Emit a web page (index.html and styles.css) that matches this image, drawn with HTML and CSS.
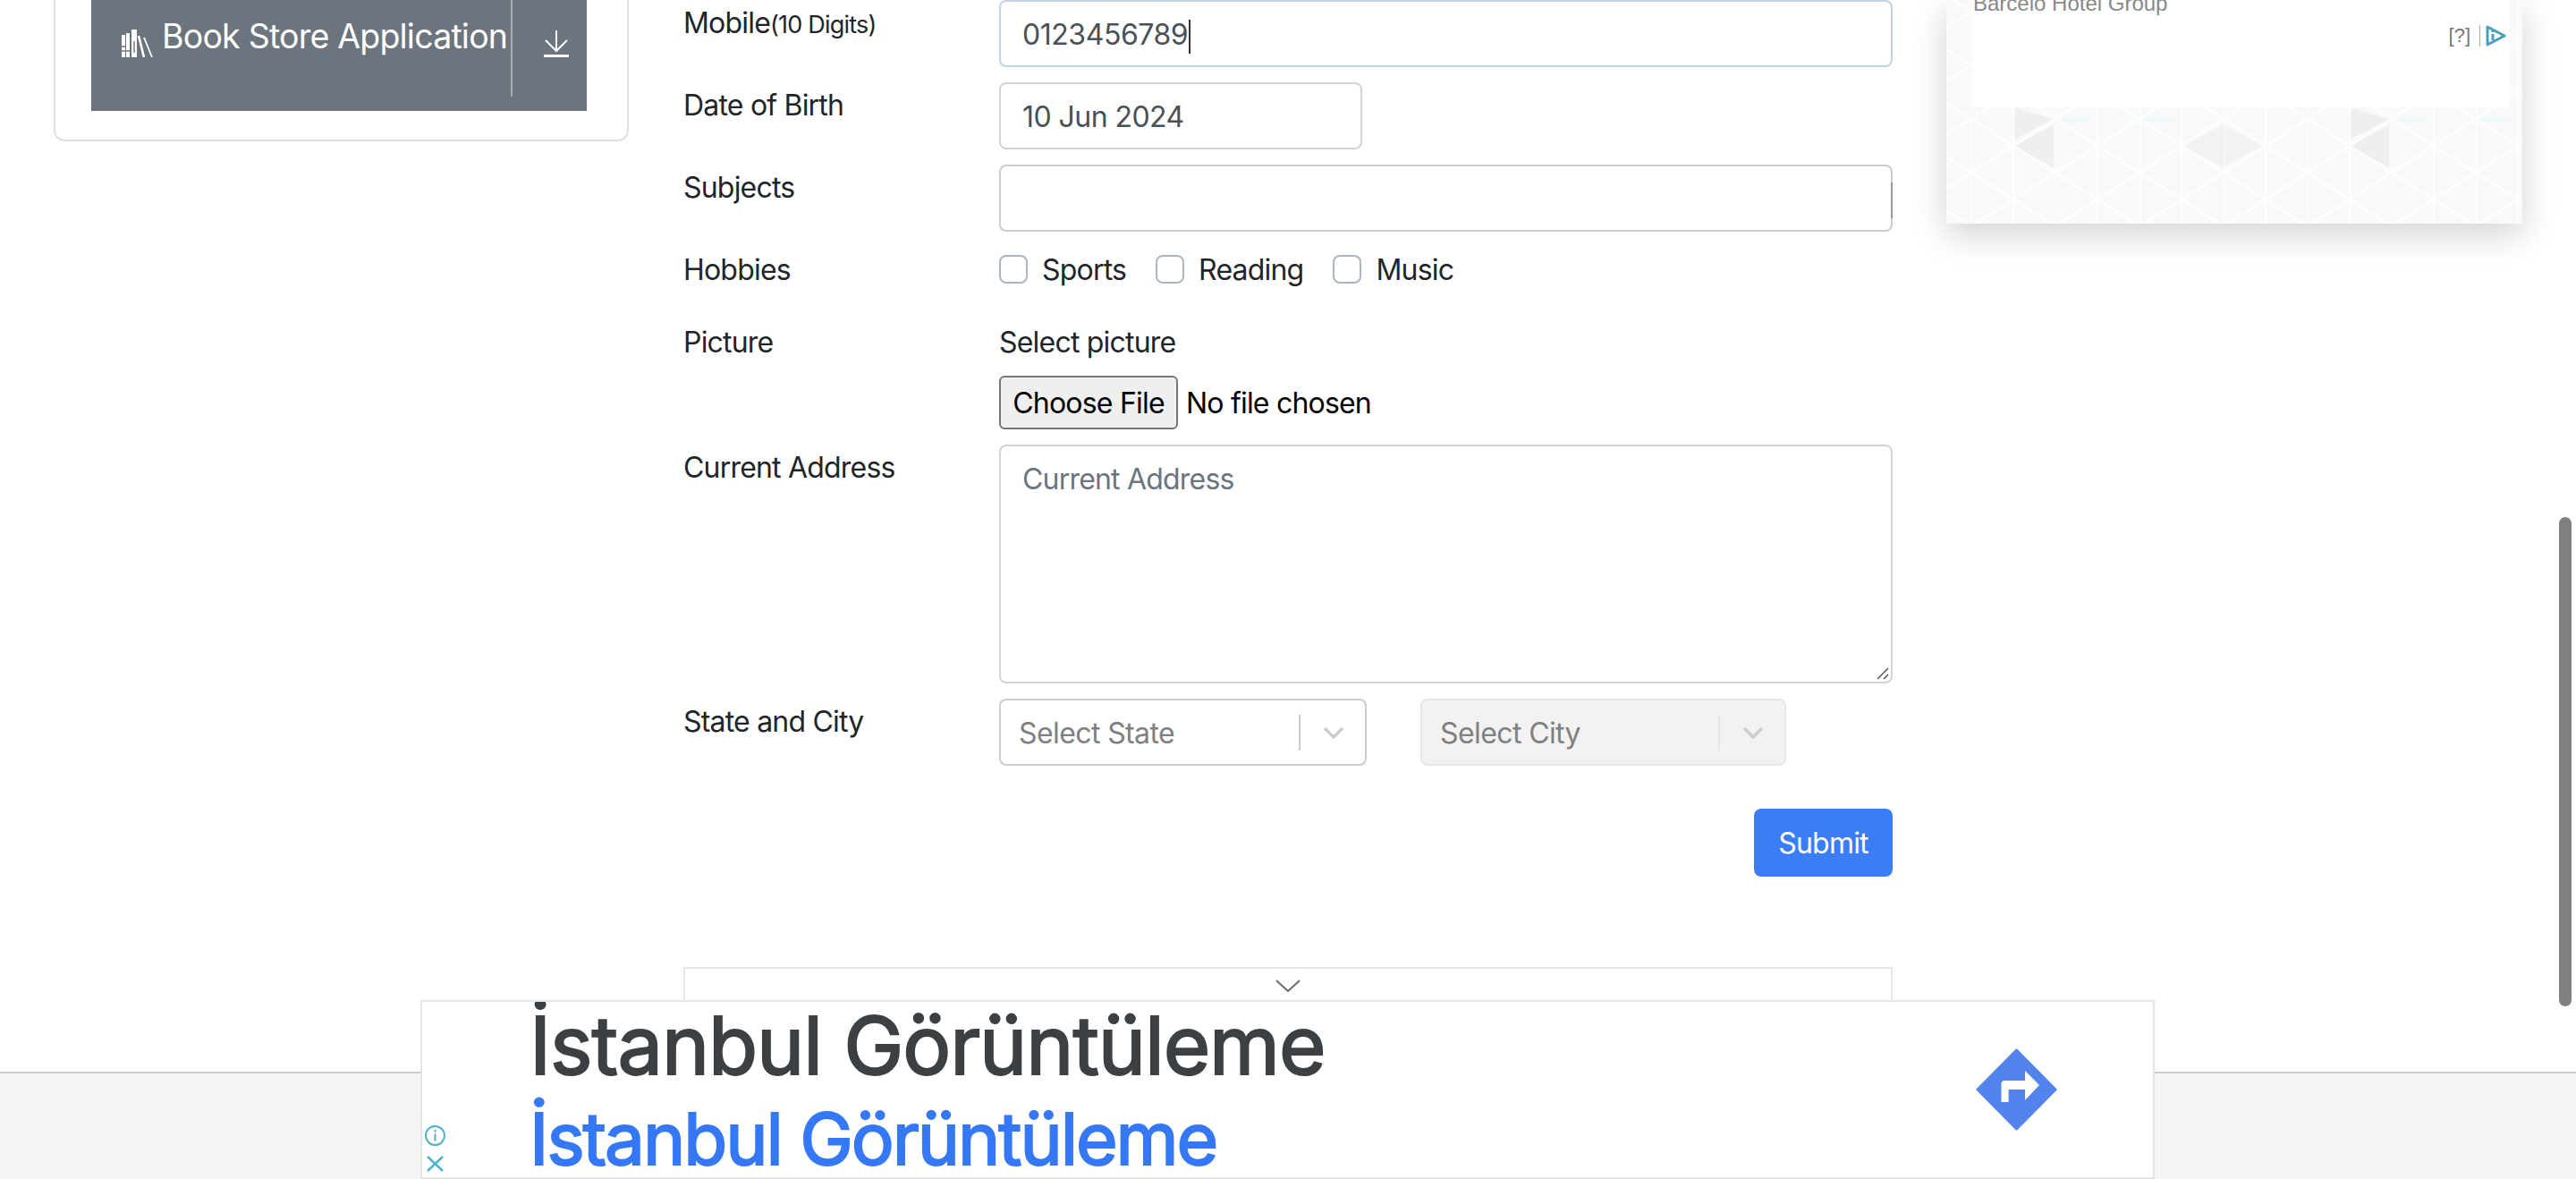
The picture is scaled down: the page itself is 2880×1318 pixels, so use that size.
FILE: index.html
```html
<!DOCTYPE html>
<html lang="en">
<head>
    <meta charset="UTF-8">
    <meta name="viewport" content="width=device-width, initial-scale=1.0">
    <title>Practice Form</title>
    <link rel="stylesheet" href="styles.css">
</head>
<body>
    <main class="page">
        <!-- Left menu -->
        <aside class="sidebar">
            <div class="menu-card">
                <div class="menu-item">
                    <svg class="book-icon" viewBox="0 0 36 32" fill="#fff">
                        <rect x="1" y="7" width="4" height="25"/>
                        <rect x="6" y="5" width="4" height="27"/>
                        <rect x="12" y="1" width="6" height="31"/>
                        <path d="M1 20h4M1 25h4M6 25h4M15 14v13" stroke="#6c757d" stroke-width="1.4"/>
                        <path d="M20 8l6 24" stroke="#fff" stroke-width="2.6"/>
                        <path d="M26 10l9 22" stroke="#fff" stroke-width="1.8"/>
                    </svg>
                    <span class="menu-text">Book Store Application</span>
                    <span class="menu-divider"></span>
                    <svg class="download-icon" viewBox="0 0 28 30" fill="none" stroke="#fff">
                        <path d="M14 0v22M2 11l12 12 12-12" stroke-width="2"/>
                        <path d="M0 28.500h28" stroke-width="3"/>
                    </svg>
                </div>
            </div>
        </aside>

        <!-- Form -->
        <section class="form-col">
            <form class="practice-form">
                <div class="row">
                    <label class="row-label">Mobile<small>(10 Digits)</small></label>
                    <div class="form-control focused">0123456789<span class="caret"></span></div>
                </div>
                <div class="row">
                    <label class="row-label">Date of Birth</label>
                    <div class="form-control date-input">10 Jun 2024</div>
                </div>
                <div class="row">
                    <label class="row-label">Subjects</label>
                    <div class="form-control subjects-input"><span class="subjects-handle"></span></div>
                </div>
                <div class="row hobbies-row">
                    <label class="row-label">Hobbies</label>
                    <div class="checks">
                        <label class="check"><input type="checkbox"><span class="check-text">Sports</span></label>
                        <label class="check"><input type="checkbox"><span class="check-text">Reading</span></label>
                        <label class="check"><input type="checkbox"><span class="check-text">Music</span></label>
                    </div>
                </div>
                <div class="row">
                    <label class="row-label">Picture</label>
                    <div class="picture-col">
                        <div class="picture-title">Select picture</div>
                        <div class="file-line"><span class="file-btn">Choose File</span><span class="file-name">No file chosen</span></div>
                    </div>
                </div>
                <div class="row">
                    <label class="row-label">Current Address</label>
                    <div class="form-control address-input">
                        <span class="placeholder">Current Address</span>
                        <svg class="resize-grip" viewBox="0 0 16 16" stroke="#555" stroke-width="1.500"><path d="M15 3L3 15M15 10l-5 5"/></svg>
                    </div>
                </div>
                <div class="row">
                    <label class="row-label">State and City</label>
                    <div class="selects">
                        <div class="select-box">
                            <span class="select-text">Select State</span>
                            <span class="select-sep"></span>
                            <svg class="select-arrow" viewBox="0 0 24 14" fill="none" stroke="#ccc" stroke-width="3.500"><path d="M2 2l10 10L22 2"/></svg>
                        </div>
                        <div class="select-box disabled">
                            <span class="select-text">Select City</span>
                            <span class="select-sep"></span>
                            <svg class="select-arrow" viewBox="0 0 24 14" fill="none" stroke="#ccc" stroke-width="3.500"><path d="M2 2l10 10L22 2"/></svg>
                        </div>
                    </div>
                </div>
                <div class="submit-line">
                    <button type="button" class="submit-btn">Submit</button>
                </div>
            </form>
            <div class="collapse-box">
                <svg class="collapse-arrow" viewBox="0 0 28 14" fill="none" stroke="#6c6c6c" stroke-width="2"><path d="M1 1l13 12L27 1"/></svg>
            </div>
        </section>

        <!-- Right ad -->
        <aside class="side-ad">
            <svg class="side-ad-bg" viewBox="0 0 644 250">
                <defs>
                    <pattern id="tri" x="28" y="13" width="94" height="60" patternUnits="userSpaceOnUse">
                        <path d="M0 0v60M47 0v60M0 0l47 30L94 0M0 60l47-30 47 30" stroke="#fff" stroke-opacity="0.8" stroke-width="2.500" fill="none"/>
                    </pattern>
                </defs>
                <rect width="644" height="250" fill="#f9f9f9"/>
                <g fill="#efefef">
                    <polygon points="75,163 120,140 120,187"/>
                    <polygon points="75,120 120,133 75,157"/>
                    <polygon points="264,163 309,140 309,187" fill-opacity="0.7"/>
                    <polygon points="309,140 354,163 309,187" fill-opacity="0.7"/>
                    <polygon points="450,163 495,140 495,187"/>
                    <polygon points="450,120 495,133 450,157"/>
                </g>
                <g fill="#eefafa">
                    <rect x="130" y="131" width="30" height="5"/>
                    <rect x="215" y="131" width="40" height="5"/>
                    <rect x="505" y="131" width="30" height="5"/>
                    <rect x="590" y="131" width="40" height="5"/>
                </g>
                <rect width="644" height="250" fill="url(#tri)"/>
            </svg>
            <div class="side-ad-box">
                <div class="side-ad-brand">Barcelo Hotel Group</div>
                <div class="side-ad-mark">
                    <span>[?]</span>
                    <span class="side-ad-sep"></span>
                    <svg class="adchoice" viewBox="0 0 24 24" fill="none" stroke="#4a9fbd" stroke-width="3"><path d="M3 2v20l19-10z" stroke-linejoin="round"/><path d="M9 10v7" /><path d="M9 6v2" /></svg>
                </div>
            </div>
        </aside>
    </main>

    <footer class="footer"></footer>

    <!-- Bottom anchor ad -->
    <div class="anchor-ad">
        <div class="anchor-title">İstanbul Görüntüleme</div>
        <div class="anchor-link">İstanbul Görüntüleme</div>
        <svg class="anchor-go" viewBox="0 0 91 92">
            <polygon points="45.500,2 89,46 45.500,90 2,46" fill="#5383ec" stroke="#5383ec" stroke-width="3" stroke-linejoin="round"/>
            <path d="M71 41L55 25V36H32Q28.500 36 28.500 39.500V60H36.600V46H55V58Z" fill="#fff"/>
        </svg>
        <svg class="anchor-info" viewBox="0 0 25 25" fill="none" stroke="#4fb1d0" stroke-width="2"><circle cx="12.500" cy="12.500" r="10.500"/><path d="M12.500 10.500v8M12.500 6v2.500"/></svg>
        <svg class="anchor-close" viewBox="0 0 21 18" fill="none" stroke="#4fb1d0" stroke-width="2.500"><path d="M2 1l17 16M19 1L2 17"/></svg>
    </div>

    <div class="scroll-thumb"></div>
</body>
</html>
```

FILE: styles.css
```css
/* Base styles */
html, body {
    height: 1318px;
    margin: 0;
    overflow: hidden;
}

body {
    position: relative;
    background: #fff;
    color: #212529;
    font-family: Inter, "Liberation Sans", sans-serif;
    font-size: 32px;
    line-height: 48px;
    letter-spacing: -0.8px;
}

.page {
    display: flex;
    align-items: flex-start;
    height: 1198px;
    padding-left: 60px;
    overflow: hidden;
}

/* Left menu */
.sidebar {
    flex: 0 0 643px;
    margin-right: 61px;
}

.menu-card {
    margin-top: -20px;
    height: 178px;
    padding: 0 45px 0 40px;
    box-sizing: border-box;
    border: 2px solid #dfdfdf;
    border-radius: 12px;
}

.menu-item {
    display: flex;
    align-items: flex-start;
    height: 142px;
    padding-left: 33px;
    background: #6c757d;
    color: #fff;
}

.book-icon {
    flex: none;
    width: 36px;
    height: 32px;
    margin-top: 50px;
}

.menu-text {
    flex: none;
    width: 386px;
    margin: 35px 0 0 10px;
    white-space: nowrap;
    font-size: 37.5px;
}

.menu-divider {
    flex: none;
    width: 2px;
    height: 126px;
    margin-left: 4px;
    background: #a9aeb3;
}

.download-icon {
    flex: none;
    width: 28px;
    height: 30px;
    margin: 52px 0 0 35px;
}

/* Form */
.form-col {
    flex: 0 0 1352px;
    margin-right: 60px;
}

.row {
    display: flex;
    margin-bottom: 17px;
}

.row-label {
    flex: 0 0 353px;
    padding-top: 2px;
}

.row-label small {
    font-size: 27px;
}

.form-control {
    position: relative;
    flex: 1;
    box-sizing: border-box;
    height: 75px;
    padding: 13px 24px;
    border: 2px solid #ced4da;
    border-radius: 8px;
    color: #495057;
}

.form-control.focused {
    border-color: #c5d3e4;
    letter-spacing: -0.45px;
}

.caret {
    display: inline-block;
    width: 2px;
    height: 38px;
    margin-left: 1px;
    vertical-align: middle;
    background: #333;
}

.date-input {
    flex: 0 0 406px;
    letter-spacing: -0.55px;
}

.subjects-input {
    border-color: #ccc;
}

.subjects-handle {
    position: absolute;
    top: 18px;
    right: -2px;
    width: 2px;
    height: 40px;
    background: #999;
}

.hobbies-row {
    margin-bottom: 31px;
}

.checks {
    display: flex;
    gap: 33px;
}

.check {
    display: flex;
    align-items: center;
}

.check-text {
    padding-top: 2px;
}

.check input {
    appearance: none;
    width: 32px;
    height: 32px;
    margin: 0 16px 0 0;
    border: 2px solid #adb5bd;
    border-radius: 8px;
    background: #fff;
}

.picture-title {
    padding-top: 2px;
    margin-bottom: 13px;
}

.file-line {
    display: flex;
    align-items: center;
    color: #000;
}

.file-btn {
    box-sizing: border-box;
    width: 200px;
    height: 60px;
    line-height: 58px;
    text-align: center;
    background: #efefef;
    border: 2px solid #767676;
    border-radius: 6px;
}

.file-name {
    margin: 2px 0 0 9px;
}

.address-input {
    height: 267px;
}

.placeholder {
    color: #6c757d;
}

.resize-grip {
    position: absolute;
    right: 2px;
    bottom: 2px;
    width: 16px;
    height: 16px;
}

.selects {
    display: flex;
    gap: 60px;
}

.select-box {
    display: flex;
    align-items: center;
    box-sizing: border-box;
    width: 411px;
    height: 75px;
    padding-left: 20px;
    border: 2px solid #ccc;
    border-radius: 8px;
    color: #808080;
    letter-spacing: -0.6px;
}

.select-box.disabled {
    width: 409px;
    background: #f2f2f2;
    border-color: #e6e6e6;
}

.select-text {
    flex: 1;
    padding-top: 2px;
}

.select-sep {
    width: 2px;
    height: 40px;
    background: #ccc;
}

.disabled .select-sep {
    background: #e6e6e6;
}

.select-arrow {
    width: 24px;
    height: 14px;
    margin: 0 23px 0 25px;
}

.submit-line {
    display: flex;
    justify-content: flex-end;
    margin-top: 48px;
}

.submit-btn {
    width: 155px;
    height: 76px;
    padding: 2px 0 0;
    border: 0;
    border-radius: 8px;
    background: #3b7cf7;
    color: #fff;
    font: inherit;
    letter-spacing: inherit;
}

.collapse-box {
    display: flex;
    justify-content: center;
    box-sizing: border-box;
    height: 140px;
    margin-top: 101px;
    padding-top: 12px;
    border: 2px solid #e6e6e6;
}

.collapse-arrow {
    width: 28px;
    height: 14px;
}

/* Right ad */
.side-ad {
    position: relative;
    flex: 0 0 644px;
    height: 250px;
    box-shadow: 0 12px 36px rgba(0, 0, 0, 0.18);
}

.side-ad-bg {
    display: block;
    width: 644px;
    height: 250px;
}

.side-ad-box {
    position: absolute;
    top: 0;
    left: 30px;
    width: 599px;
    height: 120px;
    background: #fff;
}

.side-ad-brand {
    margin-top: -10px;
    color: #888;
    font-family: "Liberation Sans", sans-serif;
    font-size: 24px;
    line-height: 28px;
    letter-spacing: 0;
}

.side-ad-mark {
    position: absolute;
    top: 28px;
    right: 3px;
    display: flex;
    align-items: center;
    color: #777;
    font-family: "Liberation Sans", sans-serif;
    font-size: 22px;
    line-height: 24px;
    letter-spacing: 0;
}

.side-ad-sep {
    width: 1px;
    height: 24px;
    margin: 0 5px 0 10px;
    background: #aaa;
}

.adchoice {
    width: 24px;
    height: 24px;
}

/* Footer and anchor ad */
.footer {
    height: 120px;
    box-sizing: border-box;
    border-top: 2px solid #ccc;
    background: #f4f4f4;
}

.anchor-ad {
    position: absolute;
    left: 470px;
    bottom: 0;
    width: 1939px;
    height: 200px;
    box-sizing: border-box;
    overflow: hidden;
    border: 2px solid #e5e5e5;
    background: #fff;
    -webkit-text-stroke: 2px currentColor;
}

.anchor-title {
    position: absolute;
    left: 120px;
    top: -6px;
    color: #3c4043;
    font-size: 90px;
    line-height: 110px;
    letter-spacing: -1.05px;
    white-space: nowrap;
}

.anchor-link {
    position: absolute;
    left: 120px;
    top: 98px;
    color: #3578f6;
    font-size: 80px;
    line-height: 110px;
    letter-spacing: -2.05px;
    white-space: nowrap;
}

.anchor-go {
    position: absolute;
    left: 1737px;
    top: 52px;
    width: 91px;
    height: 92px;
}

.anchor-info {
    position: absolute;
    left: 2px;
    top: 137px;
    width: 25px;
    height: 25px;
}

.anchor-close {
    position: absolute;
    left: 4px;
    top: 172px;
    width: 21px;
    height: 18px;
}

.scroll-thumb {
    position: absolute;
    left: 2861px;
    top: 578px;
    width: 14px;
    height: 547px;
    border-radius: 7px;
    background: #808080;
}
```
